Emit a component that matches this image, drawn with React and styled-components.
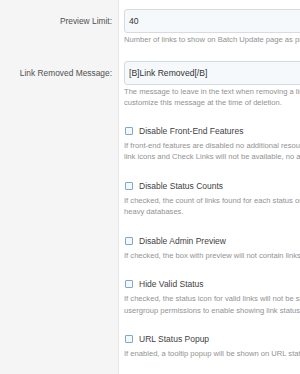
import React from 'react';
import styled, { createGlobalStyle } from 'styled-components';

const GlobalStyle = createGlobalStyle`
	html, body {
		margin: 0;
		padding: 0;
		background: #fff;
		overflow: hidden;
	}
	body {
		font-family: 'Liberation Sans', Arial, sans-serif;
	}
`;

const Page = styled.div`
	width: 300px;
	height: 374px;
	overflow: hidden;
	box-sizing: border-box;
	padding-top: 1px;
	display: grid;
	grid-template-columns: 118px 1fr;
	grid-auto-rows: min-content;
	background: linear-gradient(to right, #f5f5f5 0, #f5f5f5 118px, #e6e6e6 118px, #e6e6e6 119px, #fff 119px);
`;

const Label = styled.div`
	grid-column: 1;
	padding: 8px 6px 8px 0;
	text-align: right;
	font-size: 8.4px;
	line-height: 24px;
	color: #505050;
	white-space: nowrap;
`;

const Cell = styled.div`
	grid-column: 2;
	padding: ${(p) => (p.$input ? '8px 0 7px 6px' : '8px 0 8px 6px')};
	min-width: 0;
	width: 520px;
`;

const TextInput = styled.div`
	box-sizing: border-box;
	height: 24px;
	width: 420px;
	padding: 0 4px;
	border: 1px solid #d5dbe1;
	border-radius: 3px;
	background: #f6f9fb;
	font-size: 8.6px;
	line-height: 22px;
	color: #333;
`;

const CheckRow = styled.label`
	display: flex;
	align-items: center;
	gap: 6px;
	height: 14px;
	font-size: 8.5px;
	color: #3f3f3f;
	white-space: nowrap;
`;

const Box = styled.span`
	box-sizing: border-box;
	width: 8px;
	height: 8px;
	margin-left: 1px;
	border: 1px solid #7fa9cc;
	border-radius: 1px;
	background: #f3f8fc;
`;

const Help = styled.div`
	margin-top: ${(p) => (p.$check ? '2px' : '1px')};
	font-size: 7.6px;
	line-height: 11.5px;
	color: #929292;
	white-space: nowrap;
`;

const fields = [
	{
		label: 'Preview Limit:',
		value: '40',
		help: ['Number of links to show on Batch Update page as preview.']
	},
	{
		label: 'Link Removed Message:',
		value: '[B]Link Removed[/B]',
		help: [
			'The message to leave in the text when removing a link. You will be able to',
			'customize this message at the time of deletion.'
		]
	}
];

const checks = [
	{
		title: 'Disable Front-End Features',
		help: [
			'If front-end features are disabled no additional resources will be loaded,',
			'link icons and Check Links will not be available, no additional queries.'
		]
	},
	{
		title: 'Disable Status Counts',
		help: [
			'If checked, the count of links found for each status on the list will not be shown on',
			'heavy databases.'
		]
	},
	{
		title: 'Disable Admin Preview',
		help: ['If checked, the box with preview will not contain links.']
	},
	{
		title: 'Hide Valid Status',
		help: [
			'If checked, the status icon for valid links will not be shown. Use the',
			'usergroup permissions to enable showing link status icons.'
		]
	},
	{
		title: 'URL Status Popup',
		help: ['If enabled, a tooltip popup will be shown on URL status icons.']
	}
];

export default function App() {
	return (
		<>
			<GlobalStyle />
			<Page>
				{fields.map((f) => (
					<React.Fragment key={f.label}>
						<Label>{f.label}</Label>
						<Cell $input>
							<TextInput>{f.value}</TextInput>
							<Help>
								{f.help.map((line) => (
									<div key={line}>{line}</div>
								))}
							</Help>
						</Cell>
					</React.Fragment>
				))}
				{checks.map((c) => (
					<React.Fragment key={c.title}>
						<Label />
						<Cell>
							<CheckRow>
								<Box />
								{c.title}
							</CheckRow>
							<Help $check>
								{c.help.map((line) => (
									<div key={line}>{line}</div>
								))}
							</Help>
						</Cell>
					</React.Fragment>
				))}
			</Page>
		</>
	);
}
